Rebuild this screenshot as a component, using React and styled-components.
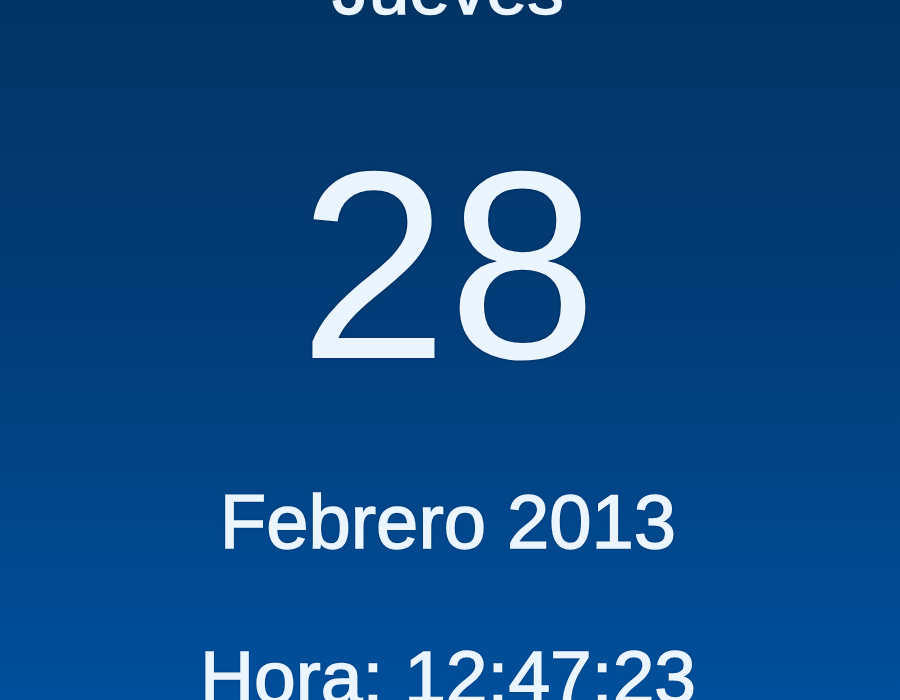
import React from 'react'
import styled, { createGlobalStyle } from 'styled-components'

const GlobalStyle = createGlobalStyle`
  html, body {
    margin: 0;
    padding: 0;
    height: 700px;
    overflow: hidden;
  }
`

const Screen = styled.div`
  width: 900px;
  height: 700px;
  overflow: hidden;
  background: linear-gradient(to bottom, #013465 0%, #023d78 45%, #004f9c 100%);
  display: flex;
  flex-direction: column;
  align-items: center;
  font-family: "Liberation Sans", Arial, sans-serif;
  color: #eaf5ff;
`

const Line = styled.div`
  font-size: ${(p) => p.size}px;
  line-height: 1;
  margin-top: ${(p) => p.gap}px;
  white-space: nowrap;
  text-align: center;
  transform: translateX(-2px);
  -webkit-text-stroke: ${(p) => p.stroke || 0}px #eaf5ff;
  text-shadow: 0 0 3px rgba(0, 20, 50, 0.55);
`

const App = () => {
  return (
    <>
      <GlobalStyle />
      <Screen>
        <Line size={73} gap={-48} stroke={1.5}>Jueves</Line>
        <Line size={268} gap={106}>28</Line>
        <Line size={76} gap={85} stroke={1.5}>Febrero 2013</Line>
        <Line size={75} gap={80} stroke={1.5}>Hora: 12:47:23</Line>
      </Screen>
    </>
  )
}

export default App
